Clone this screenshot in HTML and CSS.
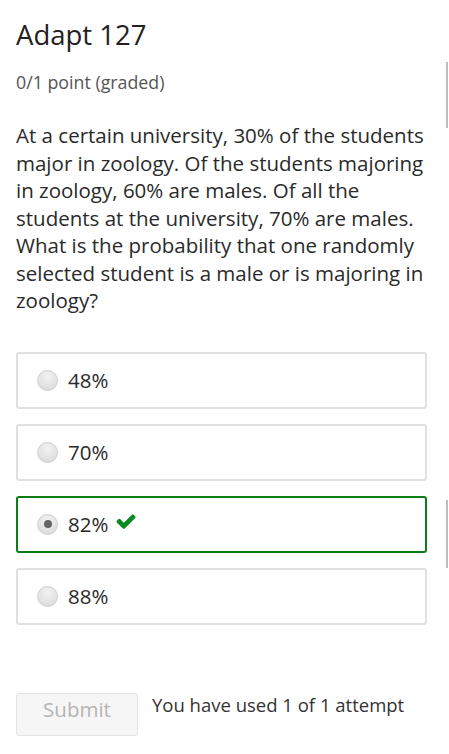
FILE: index.html
```html
<!DOCTYPE html>
<html>
<head>
<meta charset="utf-8">
<link rel="stylesheet" href="styles.css">
</head>
<body>
<div class="page">
  <h2 class="title">Adapt 127</h2>
  <div class="points">0/1 point (graded)</div>
  <p class="question">At a certain university, 30% of the students major in zoology. Of the students majoring in zoology, 60% are males. Of all the students at the university, 70% are males. What is the probability that one randomly selected student is a male or is majoring in zoology?</p>
  <div class="options">
    <div class="option"><span class="radio"></span><span class="label">48%</span></div>
    <div class="option"><span class="radio"></span><span class="label">70%</span></div>
    <div class="option correct"><span class="radio checked"></span><span class="label">82%</span>
      <svg class="check" viewBox="0 0 1792 1500" width="22" height="19"><path fill="#0b8a1e" d="M1671 566q0 40-28 68l-724 724-136 136q-28 28-68 28t-68-28l-136-136-362-362q-28-28-28-68t28-68l136-136q28-28 68-28t68 28l294 295 656-657q28-28 68-28t68 28l136 136q28 28 28 68z" transform="translate(0,-250)"/></svg>
    </div>
    <div class="option"><span class="radio"></span><span class="label">88%</span></div>
  </div>
  <div class="actions">
    <button class="submit" disabled>Submit</button>
    <span class="attempts">You have used 1 of 1 attempt</span>
  </div>
</div>
<div class="scroll s1"></div>
<div class="scroll s2"></div>
</body>
</html>
```
FILE: styles.css
```css
html, body {
  margin: 0;
  padding: 0;
  background: #fff;
}
body {
  font-family: "Open Sans", "Noto Sans", sans-serif;
  font-weight: 400;
  color: #333;
  width: 449px;
  height: 754px;
  overflow: hidden;
  position: relative;
}
.page {
  padding: 0 16px 0 16px;
}
.title {
  margin: 0;
  padding-top: 16px;
  font-size: 27.5px;
  font-weight: 400;
  line-height: 38px;
  color: #222;
}
.points {
  margin-top: 16px;
  font-size: 17.8px;
  line-height: 24px;
  color: #555;
}
.question {
  margin: 28px 0 0 0;
  font-size: 20.5px;
  line-height: 27.5px;
  color: #2a2a2a;
}
.options {
  margin-top: 37px;
  display: flex;
  flex-direction: column;
  gap: 15px;
  width: 411px;
}
.option {
  height: 53px;
  border: 2px solid #e0e0e0;
  border-radius: 3px;
  display: flex;
  align-items: center;
  padding-left: 19px;
}
.option.correct {
  border-color: #0b7d17;
}
.radio {
  width: 19px;
  height: 19px;
  border-radius: 50%;
  border: 1px solid #cfcfcf;
  background: radial-gradient(circle at 50% 30%, #f2f2f2 0%, #e2e2e2 60%, #d6d6d6 100%);
  display: flex;
  align-items: center;
  justify-content: center;
  flex: none;
}
.radio.checked::after {
  content: "";
  width: 8px;
  height: 8px;
  border-radius: 50%;
  background: #666;
}
.label {
  margin-left: 10px;
  font-size: 20.5px;
  color: #2a2a2a;
}
.check {
  margin-left: 7px;
  margin-top: -3px;
}
.actions {
  margin-top: 68px;
  display: flex;
  align-items: flex-start;
  gap: 14px;
}
.submit {
  width: 122px;
  height: 43px;
  border: 1px solid #e3e3e3;
  border-radius: 3px;
  background: #f6f6f6;
  color: #b4b4b4;
  font-family: "Open Sans", "Noto Sans", sans-serif;
  font-size: 20.5px;
  padding: 0 0 10px 0;
}
.attempts {
  font-size: 18.5px;
  color: #333;
  line-height: 24px;
  margin-top: 0px;
}
.scroll {
  position: absolute;
  left: 446px;
  width: 2px;
  background: #bdbdbd;
}
.s1 { top: 62px; height: 66px; }
.s2 { top: 500px; height: 68px; }
```
